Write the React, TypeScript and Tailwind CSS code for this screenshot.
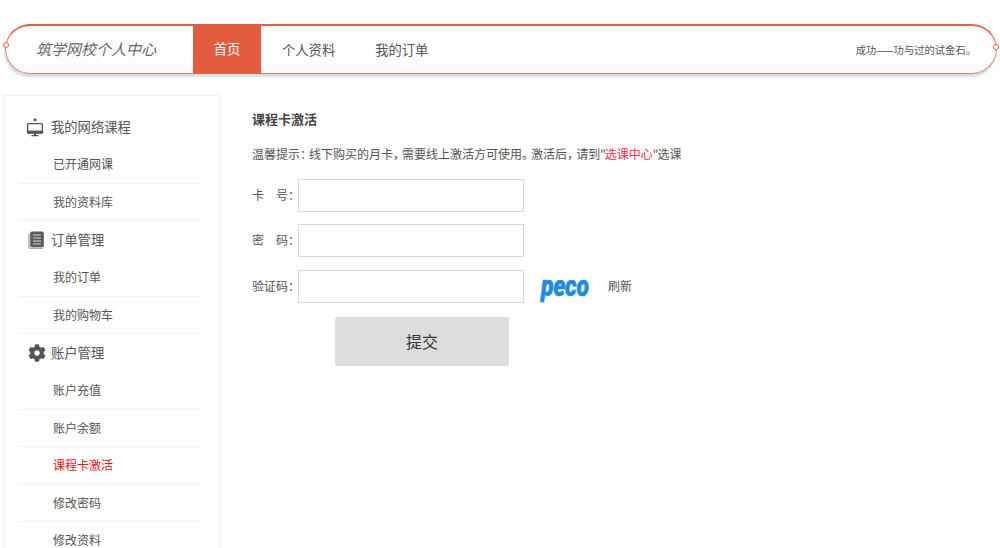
import { FaCog } from "react-icons/fa";

const accounts = ["账户充值", "账户余额", "课程卡激活", "修改密码", "修改资料"];

const fontStack = "font-['Noto_Sans_CJK_SC','Liberation_Sans',sans-serif]";

function MonitorIcon() {
  return (
    <svg width="18" height="19" viewBox="0 0 18 19" fill="none" className="-ml-[3px]">
      <circle cx="9" cy="1.8" r="1.5" fill="#555" />
      <rect x="1.6" y="5.6" width="14.8" height="9.4" rx="0.8" stroke="#555" strokeWidth="1.4" />
      <rect x="1" y="12.6" width="16" height="2.8" fill="#555" />
      <path d="M8 15h2v2h2.5v1.2h-7V17H8z" fill="#555" />
    </svg>
  );
}

function DocIcon() {
  return (
    <svg width="17" height="18" viewBox="0 0 17 18" fill="none">
      <path d="M1 2.5v13.8A1.2 1.2 0 0 0 2.2 17.5H15" stroke="#aaa" strokeWidth="1.4" />
      <rect x="2.2" y="0.6" width="13.6" height="15.6" rx="1.6" fill="#5a5a5a" />
      <path d="M5 4h8M5 7h8M5 10h8M5 13h8" stroke="#d8d8d8" strokeWidth="1.2" />
    </svg>
  );
}

function SubItem({ label, active }: { label: string; active?: boolean }) {
  return (
    <li
      className={`h-[37.5px] flex items-center pl-[34px] text-xs border-b border-dotted border-[#e6e6e6] ${
        active ? "text-[#f01414]" : "text-[#555]"
      }`}
    >
      {label}
    </li>
  );
}

function GroupTitle({ icon, label }: { icon: React.ReactNode; label: string }) {
  return (
    <div className="h-[38px] flex items-center text-[13.3px] text-[#555]">
      <span className="w-[32px] pl-[3px] flex justify-center">{icon}</span>
      {label}
    </div>
  );
}

function Field({ label }: { label: string }) {
  return (
    <div className="flex items-center">
      <span className="w-[46px] pb-[2px] text-xs text-[#555] whitespace-pre">{label}</span>
      <input className="w-[226px] h-[33px] bg-white border border-[#d9d9d9] outline-none" />
    </div>
  );
}

// narrow full-width punctuation, the reference font sets these tighter
function Punct({ char }: { char: string }) {
  return <span className="tracking-[-3px]">{char}</span>;
}

export default function App() {
  return (
    <div className={`h-[548px] w-[1000px] overflow-hidden bg-white ${fontStack}`}>
      <div className="pt-6 pl-[5px] pr-[3px]">
        <header className="relative h-[50px] rounded-[25px] border border-t-2 border-[#e8806a] border-t-[#e4603f] bg-gradient-to-b from-white from-60% to-[#f9f9f9] shadow-[-1px_3px_2px_#d5dfe5] flex items-center">
          <span className="absolute -left-[3px] top-[16px] w-[6px] h-[6px] rounded-full border border-[#e4603f] bg-white" />
          <span className="absolute -right-[3px] top-[18px] w-[6px] h-[6px] rounded-full border border-[#e4603f] bg-white" />
          <div className="w-[187px] pl-[30px] text-[15px] italic text-[#666]">筑学网校个人中心</div>
          <nav className="flex h-full text-[13.3px] text-[#555] items-center">
            <a className="w-[68px] -mt-[2px] h-[50px] flex items-center justify-center bg-[#e25c3d] text-white">首页</a>
            <a className="ml-[21px]">个人资料</a>
            <a className="ml-[40px]">我的订单</a>
          </nav>
          <div className="ml-auto pr-[20px] text-[10.3px] text-[#555]">成功——功与过的试金石。</div>
        </header>
      </div>

      <div className="flex mt-[21px] pl-[3px]">
        <aside className="w-[217px] h-[600px] border border-[#f0f0f0] px-[15px] pt-[12px] shrink-0">
          <GroupTitle icon={<MonitorIcon />} label="我的网络课程" />
          <ul>
            <SubItem label="已开通网课" />
            <SubItem label="我的资料库" />
          </ul>
          <GroupTitle icon={<DocIcon />} label="订单管理" />
          <ul>
            <SubItem label="我的订单" />
            <SubItem label="我的购物车" />
          </ul>
          <GroupTitle icon={<FaCog className="text-[#555] text-[18px]" />} label="账户管理" />
          <ul>
            {accounts.map((a) => (
              <SubItem key={a} label={a} active={a === "课程卡激活"} />
            ))}
          </ul>
        </aside>

        <main className="pl-[32px] pt-[14px]">
          <h2 className="text-[13px] font-bold text-[#444] leading-[20px]">课程卡激活</h2>
          <p className="mt-[16px] text-xs text-[#555] leading-[18px] whitespace-nowrap">
            温馨提示<Punct char={"\uFF1A"} />线下购买的月卡<Punct char={"\uFF0C"} />需要线上激活方可使用
            <Punct char={"\u3002"} />激活后<Punct char={"\uFF0C"} />请到
            <span className="tracking-[-1px]">"</span>
            <span className="text-[#f0304a]">选课中心</span>
            <span className="tracking-[-1px]">"</span>选课
          </p>
          <div className="mt-[16px] flex flex-col gap-[12px]">
            <Field label={"\u5361\u3000\u53F7\uFF1A"} />
            <Field label={"\u5BC6\u3000\u7801\uFF1A"} />
            <div className="mt-[1px] flex items-center">
              <Field label={"\u9A8C\u8BC1\u7801\uFF1A"} />
              <span className="ml-[17px] w-[50px] inline-block scale-y-[1.25] text-[23px] leading-none font-black italic text-[#1c8cec] font-['Roboto',sans-serif] tracking-[-0.3px] [-webkit-text-stroke:0.5px_#1c8cec]">
                peco
              </span>
              <a className="ml-[17px] pb-[2px] text-xs text-[#555]">刷新</a>
            </div>
          </div>
          <button className="mt-[14px] ml-[83px] w-[174px] h-[49px] pb-[2px] rounded-[2px] bg-[#dddddd] text-base text-[#333]">
            提交
          </button>
        </main>
      </div>
    </div>
  );
}
